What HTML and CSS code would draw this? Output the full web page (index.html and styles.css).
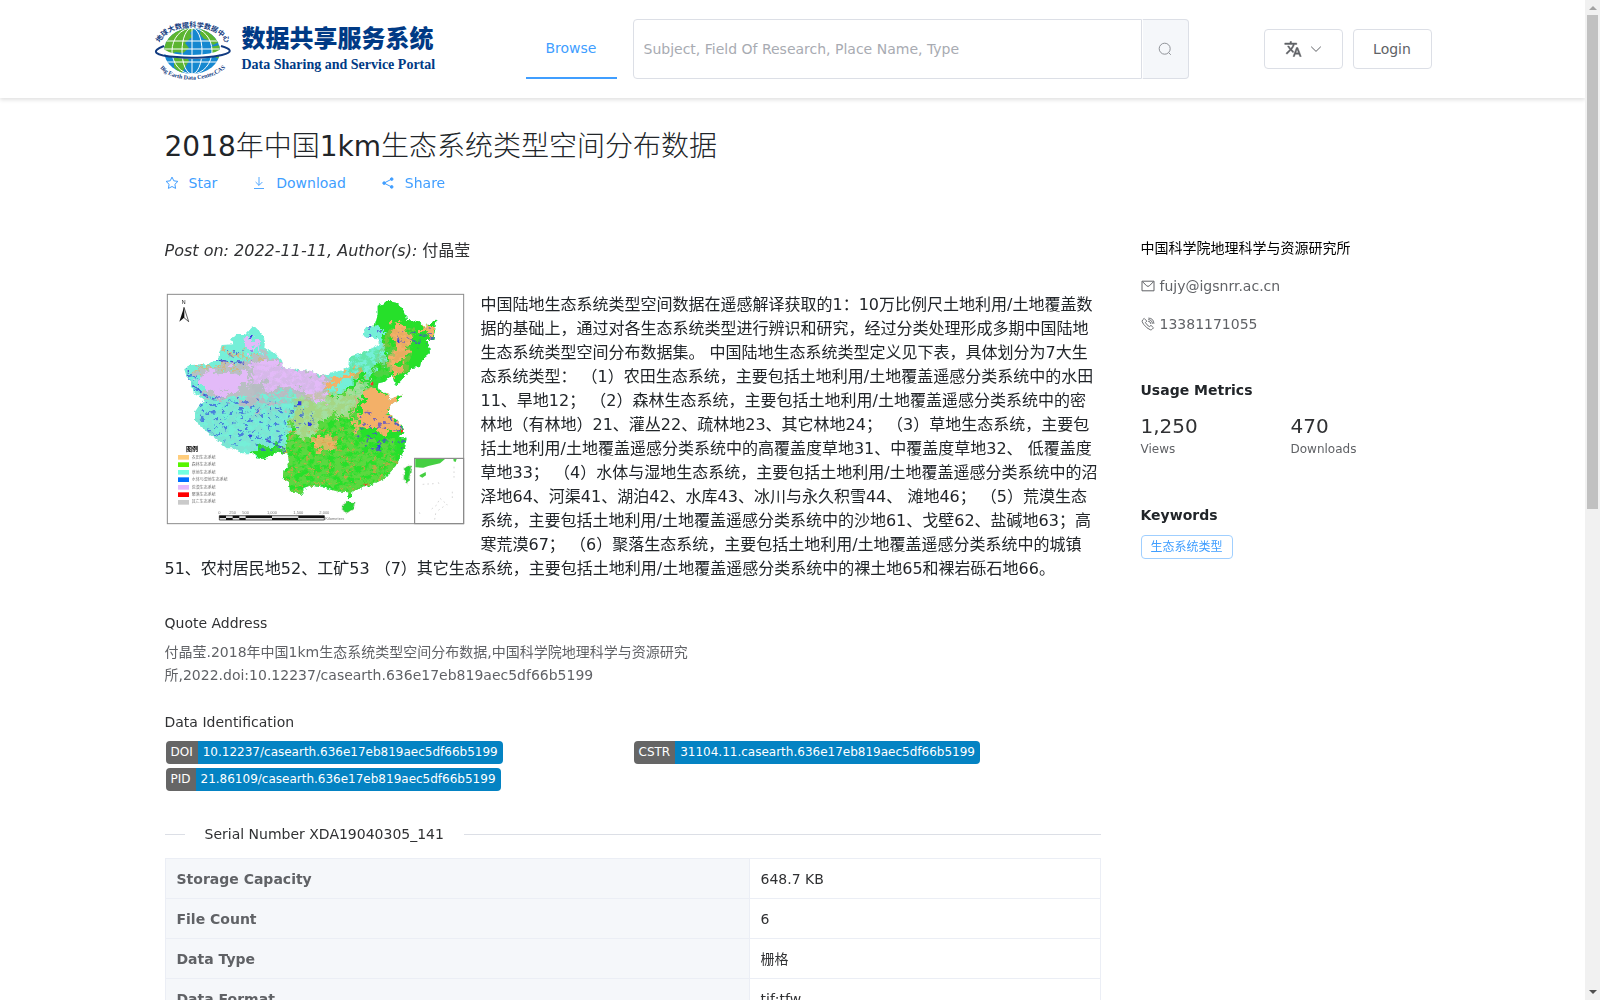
FILE: index.html
```html
<!DOCTYPE html>
<html lang="zh-CN">
<head>
<meta charset="utf-8">
<title>2018年中国1km生态系统类型空间分布数据</title>
<link rel="stylesheet" href="styles.css">
</head>
<body>
<div class="viewport">
<div class="page">
  <header class="header">
    <div class="container header-row">
      <a class="logo" href="#" aria-label="数据共享服务系统">
        <svg class="logo-globe" viewBox="0 0 78 62" role="img" aria-label="Big Earth Data Center">
          <defs>
            <path id="arc-top" d="M6 25 C13 4 65 4 72 26"/>
            <path id="arc-bottom" d="M6 50 C19 66 58 66 74 47"/>
            <clipPath id="globe"><ellipse cx="38" cy="33" rx="28" ry="23"/></clipPath>
          </defs>
          <ellipse cx="38" cy="33" rx="28" ry="23" fill="#1588d0"/>
          <g clip-path="url(#globe)">
            <path fill="#5cb531" d="M8 31 12 15 30 9 41 10 36 15 38 19 31 25 35 30 29 35 21 34 17 39ZM20 38 32 37 35 43 30 51 27 57 20 49ZM47 11 57 12 65 24 59 27 54 22 50 21 46 16ZM57 29 66 27 65 41 59 38Z"/>
            <g fill="none" stroke="#fff" stroke-width="1">
              <path d="M10 23H66M8 31H68M12 44H64M38 9V57"/>
              <ellipse cx="38" cy="33" rx="10" ry="23"/>
              <ellipse cx="38" cy="33" rx="20" ry="23"/>
            </g>
          </g>
          <path fill="none" stroke="#fff" stroke-width="4" d="M9 33 C20 41 56 41 68 33"/>
          <path fill="none" stroke="#123b80" stroke-width="2" d="M10 28 C-4 33 0 38 23 39 C40 41 60 39 68 37 C80 34 77 31 67 28"/>
          <text class="logo-arc"><textPath href="#arc-top">地球大数据科学数据中心</textPath></text>
          <text class="logo-arc logo-arc-en"><textPath href="#arc-bottom">Big Earth Data Center,CAS</textPath></text>
        </svg>
        <span class="logo-text">
          <span class="logo-cn">数据共享服务系统</span>
          <span class="logo-en">Data Sharing and Service Portal</span>
        </span>
      </a>
      <nav class="nav"><a class="nav-link" href="#">Browse</a></nav>
      <form class="search">
        <input class="search-input" type="text" aria-label="Search" placeholder="Subject, Field Of Research, Place Name, Type">
        <button class="search-button" type="button" aria-label="Search">
          <svg class="icon" viewBox="0 0 14 14" fill="none" stroke="#909399"><circle cx="6.7" cy="6.7" r="5.5"/><path d="M10.6 10.6 12.8 12.8"/></svg>
        </button>
      </form>
      <div class="actions">
        <button class="button" type="button" aria-label="Language">
          <svg class="icon-lang" viewBox="0 0 24 24" fill="#606266" stroke="#606266" stroke-width="0.6"><path d="M12.87 15.07l-2.54-2.51.03-.03c1.74-1.94 2.98-4.17 3.71-6.53H17V4h-7V2H8v2H1v1.99h11.17C11.5 7.92 10.44 9.75 9 11.35 8.07 10.32 7.3 9.19 6.69 8h-2c.73 1.63 1.73 3.17 2.98 4.56l-5.09 5.02L4 19l5-5 3.11 3.11.76-2.04zM18.5 10h-2L12 22h2l1.12-3h4.75L21 22h2l-4.5-12zm-2.62 7l1.62-4.33L19.12 17h-3.24z"/></svg>
          <svg class="icon" viewBox="0 0 14 14" fill="none" stroke="#606266"><path d="M2.2 4.7 7 9.4 11.8 4.7"/></svg>
        </button>
        <button class="button" type="button">Login</button>
      </div>
    </div>
  </header>

  <div class="container columns">
    <main class="main">
      <h1 class="title">2018年中国1km生态系统类型空间分布数据</h1>
      <div class="tools">
        <a class="tool" href="#"><svg class="icon" viewBox="0 0 14 14" fill="none" stroke="#409eff"><path stroke-linejoin="round" d="M7 1.1 8.8 4.8 12.9 5.4 9.9 8.3 10.6 12.4 7 10.5 3.4 12.4 4.1 8.3 1.1 5.4 5.2 4.8Z"/></svg>Star</a>
        <a class="tool" href="#"><svg class="icon" viewBox="0 0 14 14" fill="none" stroke="#409eff" stroke-width="0.9"><path d="M7 1V9.3M3.6 6 7 9.4 10.4 6M2 12.5H12"/></svg>Download</a>
        <a class="tool" href="#"><svg class="icon" viewBox="0 0 14 14" fill="#409eff" stroke="#409eff"><path fill="none" d="M10.8 3 3 7.1 10.8 11"/><circle cx="10.7" cy="3.1" r="1.3"/><circle cx="3.1" cy="7.1" r="1.3"/><circle cx="10.7" cy="10.9" r="1.3"/></svg>Share</a>
      </div>

      <p class="byline"><i>Post on: 2022-11-11, Author(s):</i> 付晶莹</p>

      <article class="abstract">
        <svg class="map" viewBox="30 24 900 696" role="img" aria-label="中国生态系统类型空间分布图">
          <defs>
            <path id="land" d="M87 250 105 240 150 238 190 225 192 205 200 180 235 178 228 165 240 150 270 150 290 128 300 125 322 148 330 170 328 190 360 205 380 225 388 248 430 255 470 258 500 272 540 262 580 250 582 215 620 205 650 190 675 178 670 160 640 158 625 155 630 130 660 120 668 90 668 62 700 48 730 55 745 75 757 105 790 108 808 125 845 103 840 135 835 165 812 165 822 180 825 205 800 225 795 245 770 250 745 280 722 302 718 290 712 268 690 290 670 295 668 310 690 325 703 330 700 345 740 328 738 335 705 362 700 385 725 405 745 430 748 445 730 455 755 458 750 490 735 520 720 545 690 580 650 600 620 610 592 618 590 640 580 640 580 622 540 618 500 605 480 600 445 612 445 630 420 620 405 622 402 590 383 580 385 560 402 540 400 510 370 500 330 522 303 520 300 505 255 505 240 490 215 490 180 460 150 435 120 405 120 380 130 365 150 345 120 325 105 300 110 290 95 275Z"/>
            <clipPath id="land-clip"><use href="#land"/></clipPath>
            <filter id="rough" x="-10%" y="-10%" width="120%" height="120%">
              <feTurbulence type="fractalNoise" baseFrequency="0.04" numOctaves="4" seed="4"/>
              <feDisplacementMap in="SourceGraphic" scale="70" xChannelSelector="R" yChannelSelector="G"/>
            </filter>
            <filter id="coast" x="-5%" y="-5%" width="110%" height="110%">
              <feTurbulence type="fractalNoise" baseFrequency="0.09" numOctaves="3" seed="2"/>
              <feDisplacementMap in="SourceGraphic" scale="12" xChannelSelector="R" yChannelSelector="G"/>
            </filter>
            <filter id="speck" x="0" y="0" width="100%" height="100%">
              <feTurbulence type="fractalNoise" baseFrequency="0.05 0.07" numOctaves="5" seed="9"/>
              <feColorMatrix values="0 0 0 0 0  0 0 0 0 0  0 0 0 0 0  6 0 0 0 -2.3" result="n"/>
              <feComposite in="SourceGraphic" in2="n" operator="in"/>
            </filter>
            <filter id="speck-rare" x="0" y="0" width="100%" height="100%">
              <feTurbulence type="fractalNoise" baseFrequency="0.06 0.09" numOctaves="4" seed="21"/>
              <feColorMatrix values="0 0 0 0 0  0 0 0 0 0  0 0 0 0 0  0 14 0 0 -8.6" result="n"/>
              <feComposite in="SourceGraphic" in2="n" operator="in"/>
            </filter>
          </defs>
          <rect x="30" y="24" width="900" height="696" fill="#fff"/>
          <g filter="url(#coast)"><g clip-path="url(#land-clip)">
            <rect x="80" y="40" width="780" height="620" fill="#74efd8"/>
            <g filter="url(#rough)">
              <path fill="#27e02b" d="M300 530 295 495 350 480 385 488 400 440 430 400 440 330 480 345 560 325 620 270 680 240 700 210 675 180 690 140 650 120 650 40 870 40 870 330 760 400 780 650 380 650 380 540Z"/>
              <path fill="#a4dfa0" d="M410 400 440 325 500 345 590 320 640 280 610 350 570 390 500 400 470 470 430 450Z"/>
              <path fill="#b9bfc4" d="M180 300 110 262 190 245 280 230 320 190 390 245 500 265 530 275 510 340 480 350 400 325 300 335 400 362 300 365 250 345 130 335Z"/>
              <path fill="#e3baf8" d="M125 285 150 260 220 255 270 265 290 290 250 315 190 330 150 315ZM255 185 270 160 305 165 312 190 275 198ZM290 235 370 235 440 260 500 275 515 300 505 345 485 350 440 310 340 305 290 285Z"/>
              <path fill="#f3b067" d="M630 300 650 295 690 330 745 325 700 370 705 390 750 440 690 440 640 430 600 445 595 415 635 350ZM715 110 745 120 770 155 765 190 745 215 735 260 712 275 700 240 725 180 708 150ZM478 465 510 445 535 455 540 475 510 500 485 495ZM800 130 845 110 840 160 810 150ZM600 250 630 265 540 300 520 340 515 300Z"/>
              <path fill="none" stroke="#cdb98a" stroke-width="6" d="M200 185 230 210 300 215 335 225M110 258 200 240 280 245M540 405 590 390 610 350 600 330"/>
            </g>
            <g filter="url(#speck)" opacity="0.6">
              <path fill="#a5b6bd" d="M80 340H420V500H80Z" opacity="0.3"/>
              <path fill="#b2b7bd" d="M290 235 520 260 510 350 290 400Z" opacity="0.4"/>
              <path fill="#a6ca5e" d="M410 330 600 310 620 460 720 460 720 620 380 640 385 500Z" opacity="0.7"/>
              <path fill="#d9a55a" d="M700 130 780 130 760 260 640 280Z" opacity="0.7"/>
              <path fill="#46d95e" d="M570 210 720 180 710 290 600 330Z" opacity="0.6"/>
            </g>
            <g filter="url(#speck-rare)" opacity="0.7">
              <path fill="#3357e0" d="M80 240 110 240 150 325 300 340 470 370 480 430 400 510 180 470 110 370Z"/>
              <path fill="#4c46d6" d="M190 195H290V240H190ZM600 380H760V500H600ZM630 120H680V170H630ZM730 130H850V190H730Z"/>
              <path fill="#dc9b4b" d="M390 430H600V620H390ZM600 500H740V600H600Z"/>
            </g>
            <path fill="none" stroke="#4b54cf" stroke-width="4" d="M100 255V280L115 300 145 330 180 345M180 225 215 228 270 235M330 462 365 478 390 495M700 395 745 435" stroke-dasharray="11 3 5 4"/>
            <path fill="#3340e0" d="M426 349h13v12h-13ZM458 410l12 4-2 10-8-2ZM283 448l9 2-3 9-7-2ZM668 480l10 4-6 10-7-5ZM728 150l6 20-8 6ZM285 150h8v8h-8Z"/>
            <path fill="#ed3a23" d="M647 293h8v8h-8ZM738 432h9v9h-9ZM628 595l9 1-1 8-7-2Z"/>
          </g>
          <path fill="#25d732" stroke="#9a9b78" stroke-width="1" d="M752 546 768 542 765 570 758 598 746 580ZM563 660 580 650 600 652 594 672 577 683 562 674Z"/></g>
          <g>
            <rect x="779" y="520" width="147" height="196" fill="#fff" stroke="#777" stroke-width="3"/>
            <path fill="#45cf42" d="M781 522H870L855 535 820 543 805 548 781 547ZM795 570 812 561 813 571 802 578 793 573ZM895 522h10l-3 9-6-2Z"/>
            <path fill="none" stroke="#c4c4c4" stroke-width="2" stroke-dasharray="5 9" d="M897 545V585M850 592 855 605M803 598 837 596M892 620V640M830 672 845 660 855 640 878 660M850 676 875 658M793 682 796 690M842 685 838 710"/>
          </g>
          <rect x="37" y="28" width="889" height="688" fill="none" stroke="#8b8b8b" stroke-width="3"/>
          <text class="map-n" x="80" y="58">N</text>
          <path fill="#111" d="M87 67 73 110 87 98Z"/><path fill="#fff" stroke="#111" stroke-width="2" d="M87 67 101 110 87 98Z"/>
          <text class="map-heading" x="93" y="498">图例</text>
          <g class="map-legend">
            <rect x="69" y="510" width="33" height="14" fill="#ffcd7c"/><text x="110" y="522">农田生态系统</text>
            <rect x="69" y="532" width="33" height="14" fill="#57f500"/><text x="110" y="544">森林生态系统</text>
            <rect x="69" y="555" width="33" height="14" fill="#72ffe0"/><text x="110" y="566">草地生态系统</text>
            <rect x="69" y="577" width="33" height="14" fill="#0070ff"/><text x="110" y="588">水体与湿地生态系统</text>
            <rect x="69" y="600" width="33" height="14" fill="#e6b9fb"/><text x="110" y="611">荒漠生态系统</text>
            <rect x="69" y="622" width="33" height="14" fill="#f00"/><text x="110" y="633">聚落生态系统</text>
            <rect x="69" y="645" width="33" height="14" fill="#cacaca"/><text x="110" y="655">其它生态系统</text>
            <text x="190" y="686">0</text><text x="223" y="686">250</text><text x="262" y="686">500</text><text x="336" y="686">1,000</text><text x="415" y="686">1,500</text><text x="493" y="686">2,000</text><text x="511" y="704">Kilometers</text>
          </g>
          <path fill="#ddd" stroke="#111" stroke-width="2" d="M193 692H508V705H193Z"/>
          <path fill="#111" d="M193 692h20v7h20v-7h20v7h19v-7h79v7h79v-7h78v7H429v6H351v-6H272v6H253v-6H233v6H213v-6H193Z"/>
        </svg>
        中国陆地生态系统类型空间数据在遥感解译获取的1：10万比例尺土地利用/土地覆盖数据的基础上，通过对各生态系统类型进行辨识和研究，经过分类处理形成多期中国陆地生态系统类型空间分布数据集。 中国陆地生态系统类型定义见下表，具体划分为7大生态系统类型： （1）农田生态系统，主要包括土地利用/土地覆盖遥感分类系统中的水田11、旱地12； （2）森林生态系统，主要包括土地利用/土地覆盖遥感分类系统中的密林地（有林地）21、灌丛22、疏林地23、其它林地24； （3）草地生态系统，主要包括土地利用/土地覆盖遥感分类系统中的高覆盖度草地31、中覆盖度草地32、 低覆盖度草地33； （4）水体与湿地生态系统，主要包括土地利用/土地覆盖遥感分类系统中的沼泽地64、河渠41、湖泊42、水库43、冰川与永久积雪44、 滩地46； （5）荒漠生态系统，主要包括土地利用/土地覆盖遥感分类系统中的沙地61、戈壁62、盐碱地63；高寒荒漠67； （6）聚落生态系统，主要包括土地利用/土地覆盖遥感分类系统中的城镇51、农村居民地52、工矿53 （7）其它生态系统，主要包括土地利用/土地覆盖遥感分类系统中的裸土地65和裸岩砾石地66。
      </article>

      <h2 class="subhead">Quote Address</h2>
      <p class="quote">付晶莹.2018年中国1km生态系统类型空间分布数据,中国科学院地理科学与资源研究所,2022.doi:10.12237/casearth.636e17eb819aec5df66b5199</p>

      <h2 class="subhead">Data Identification</h2>
      <div class="ids">
        <a class="badge" href="#"><span class="badge-key">DOI</span><span class="badge-value">10.12237/casearth.636e17eb819aec5df66b5199</span></a>
        <a class="badge" href="#"><span class="badge-key">CSTR</span><span class="badge-value">31104.11.casearth.636e17eb819aec5df66b5199</span></a>
        <a class="badge" href="#"><span class="badge-key">PID</span><span class="badge-value">21.86109/casearth.636e17eb819aec5df66b5199</span></a>
      </div>

      <div class="divider">Serial Number XDA19040305_141</div>
      <table class="facts">
        <tbody>
          <tr><th scope="row">Storage Capacity</th><td>648.7 KB</td></tr>
          <tr><th scope="row">File Count</th><td>6</td></tr>
          <tr><th scope="row">Data Type</th><td>栅格</td></tr>
          <tr><th scope="row">Data Format</th><td>tif;tfw</td></tr>
        </tbody>
      </table>
    </main>

    <aside class="side">
      <p class="org">中国科学院地理科学与资源研究所</p>
      <p class="contact"><svg class="icon" viewBox="0 0 14 14" fill="none" stroke="#606266"><path d="M1 2.2H13V11.8H1ZM1.5 2.7 5.6 6.8Q7 8 8.4 6.8L12.5 2.7"/></svg>fujy@igsnrr.ac.cn</p>
      <p class="contact"><svg class="icon" viewBox="0 0 14 14" fill="none" stroke="#606266" stroke-width="0.9"><path d="M3.2 1.4 1.5 3Q.3 4.3 2.6 7.3 6 11.6 9.3 12.8 10.4 13 11.2 12.2L12.5 10.8 10 8.4 8.3 9.6Q5.7 8 4.4 5.6L5.8 4.1ZM7.2 4.3Q9.7 4.3 9.8 6.9M7.3 1.1Q12.7 1.1 12.9 6.8M7.2 2.6Q11.3 2.8 11.4 6.8"/></svg>13381171055</p>
      <h2 class="side-head">Usage Metrics</h2>
      <dl class="metrics">
        <div class="metric"><dd>1,250</dd><dt>Views</dt></div>
        <div class="metric"><dd>470</dd><dt>Downloads</dt></div>
      </dl>
      <h2 class="side-head">Keywords</h2>
      <a class="tag" href="#">生态系统类型</a>
    </aside>
  </div>
</div>
<div class="scrollbar" aria-hidden="true">
  <span class="arrow-up"></span>
  <span class="thumb"></span>
  <span class="arrow-down"></span>
</div>
</div>
</body>
</html>
```
FILE: styles.css
```css
* {
  box-sizing: border-box;
}

body {
  margin: 0;
  background: #fff;
  color: #303133;
  font: 14px/24px "DejaVu Sans", "Noto Sans CJK SC", sans-serif;
}

h1, h2, p, dl, dd {
  margin: 0;
}

a {
  color: inherit;
  text-decoration: none;
}

button, input {
  font: inherit;
}

.viewport {
  display: flex;
  height: 100vh;
  overflow: hidden;
}

.page {
  flex: 1;
  min-width: 0;
  overflow: hidden;
}

.container {
  width: 100%;
  max-width: 1280px;
  margin: 0 auto;
}

.header {
  height: 98px;
  box-shadow: 0 2px 4px rgba(0, 0, 0, 0.12);
}

.header-row {
  display: grid;
  grid-template-columns: 373px 91px minmax(200px, 556px) 1fr;
  align-items: center;
  height: 98px;
}

.logo {
  display: flex;
  align-items: center;
  gap: 10px;
  padding-left: 1px;
}

.logo-globe {
  width: 78px;
  height: 62px;
}

.logo-arc {
  fill: #123b80;
  font: 700 7px "Noto Sans CJK SC", sans-serif;
}

.logo-arc-en {
  font: 700 6px "Liberation Serif", serif;
}

.logo-text {
  display: flex;
  flex-direction: column;
  padding-top: 4px;
  color: #003a85;
  white-space: nowrap;
}

.logo-cn {
  font: 900 24px/28px "Noto Sans CJK SC", sans-serif;
}

.logo-en {
  font: 700 14px/28px "Liberation Serif", serif;
}

.nav-link {
  display: block;
  height: 60px;
  border-bottom: 2px solid #409eff;
  color: #409eff;
  line-height: 58px;
  text-align: center;
}

.search {
  display: flex;
  height: 60px;
  margin-left: 16px;
  margin-right: -16px;
}

.search-input {
  flex: 1;
  min-width: 0;
  padding: 0 10px;
  border: 1px solid #dcdfe6;
  border-radius: 4px 0 0 4px;
  color: #606266;
  outline: 0;
}

.search-input::placeholder {
  color: #a8abb2;
  opacity: 1;
}

.search-button {
  display: flex;
  align-items: center;
  justify-content: center;
  width: 47px;
  border: 1px solid #dcdfe6;
  border-left-color: #fff;
  border-radius: 0 4px 4px 0;
  background: #f5f7fa;
}

.icon {
  flex: none;
  width: 14px;
  height: 14px;
}

.icon-lang {
  width: 18px;
  height: 18px;
}

.actions {
  display: flex;
  justify-content: flex-end;
  gap: 10px;
  padding-right: 1px;
}

.button {
  display: flex;
  align-items: center;
  justify-content: center;
  gap: 7px;
  width: 79px;
  height: 40px;
  padding: 0;
  border: 1px solid #dcdfe6;
  border-radius: 4px;
  background: #fff;
  color: #606266;
}

.columns {
  display: flex;
}

.main {
  flex: none;
  width: 75%;
  padding: 29px 12px 0;
}

.title {
  color: #212529;
  font-family: "DejaVu Sans", "Noto Sans CJK SC Light", "Noto Sans CJK SC", sans-serif;
  font-size: 28px;
  font-weight: 400;
  line-height: 40px;
}

.tools {
  display: flex;
  gap: 35px;
  margin-top: 4px;
}

.tool {
  display: flex;
  align-items: center;
  gap: 10px;
  color: #409eff;
}

.byline {
  margin-top: 44px;
  font-size: 16px;
}

.abstract {
  margin-top: 30px;
  color: #212529;
  font-size: 16px;
  line-height: 24px;
}

.map {
  float: left;
  width: 300px;
  height: 232px;
  margin-right: 16px;
  margin-bottom: 16px;
}

.map-n {
  font: 16px "Liberation Sans", sans-serif;
}

.map-heading {
  font: 700 18px "Noto Sans CJK SC", sans-serif;
}

.map-legend text {
  fill: #777;
  font: 12px "Liberation Sans", "Noto Sans CJK SC", sans-serif;
}

.subhead {
  margin-top: 30px;
  font-size: 14px;
  font-weight: 400;
  line-height: 24px;
}

.quote {
  max-width: 540px;
  margin-top: 6px;
  color: #606266;
  line-height: 23px;
}

.quote + .subhead {
  margin-top: 23px;
}

.ids {
  display: grid;
  grid-template-columns: 1fr 1fr;
  gap: 4px 0;
  margin-top: 7px;
}

.badge {
  display: flex;
  justify-self: start;
  height: 23px;
  margin-left: 1px;
  overflow: hidden;
  border-radius: 4px;
  color: #fff;
  font-size: 12px;
  line-height: 23px;
  white-space: nowrap;
}

.badge-key {
  padding: 0 5px;
  background: #666;
}

.badge-value {
  padding: 0 5px;
  background: #0483c3;
}

.divider {
  display: flex;
  align-items: center;
  gap: 20px;
  margin-top: 31px;
}

.divider::before,
.divider::after {
  flex: 1;
  height: 1px;
  background: #dcdfe6;
  content: "";
}

.divider::before {
  flex: 0 0 20px;
}

.facts {
  width: 100%;
  margin-top: 12px;
  border-collapse: collapse;
  table-layout: fixed;
}

.facts th,
.facts td {
  height: 40px;
  padding: 0 11px;
  border: 1px solid #ebeef5;
  text-align: left;
}

.facts th {
  width: 584px;
  background: #f5f7fa;
  color: #606266;
}

.side {
  flex: 1;
  min-width: 0;
  padding: 138px 12px 0 28px;
}

.org {
  color: #000;
}

.contact {
  display: flex;
  align-items: center;
  gap: 5px;
  margin-top: 14px;
  color: #606266;
}

.side-head {
  margin-top: 42px;
  color: #212529;
  font-size: 14px;
  line-height: 24px;
}

.metrics {
  display: grid;
  grid-template-columns: 150px 1fr;
  margin-top: 12px;
}

.metric {
  display: flex;
  flex-direction: column;
}

.metric dd {
  font-size: 20px;
}

.metric dt {
  color: #606266;
  font-size: 12px;
  line-height: 23px;
}

.tag {
  display: inline-block;
  height: 24px;
  margin-top: 8px;
  padding: 0 9px;
  border: 1px solid #a0cfff;
  border-radius: 4px;
  color: #409eff;
  font-size: 12px;
  line-height: 22px;
}

.scrollbar {
  display: flex;
  flex-direction: column;
  align-items: center;
  width: 15px;
  padding: 6px 0;
  background: #f1f1f1;
}

.arrow-up,
.arrow-down {
  border: 4px solid transparent;
}

.arrow-up {
  border-top: 0;
  border-bottom-color: #a3a3a3;
}

.arrow-down {
  border-bottom: 0;
  border-top-color: #505050;
}

.thumb {
  width: 11px;
  height: 50%;
  margin: 5px 0 auto;
  background: #c1c1c1;
}
```
